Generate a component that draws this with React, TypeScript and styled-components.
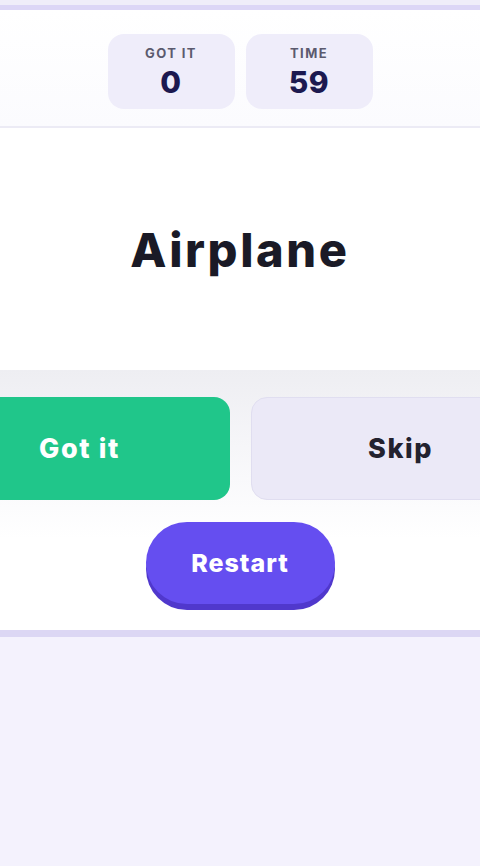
import styled, { createGlobalStyle } from "styled-components";

const GlobalStyle = createGlobalStyle`
  html, body {
    margin: 0;
    padding: 0;
    background: #f4f2fd;
    font-family: "Inter", "Liberation Sans", sans-serif;
  }
`;

function App() {
  return (
    <>
      <GlobalStyle />
      <Page>
        <TopStrip />
        <Stage>
          <Card>
            <StatsBar>
              <StatBox>
                <span className="label">GOT IT</span>
                <span className="value">0</span>
              </StatBox>
              <StatBox>
                <span className="label">TIME</span>
                <span className="value">59</span>
              </StatBox>
            </StatsBar>

            <WordArea>
              <h1>Airplane</h1>
            </WordArea>

            <Actions>
              <ButtonRow>
                <BigButton $variant="success">Got it</BigButton>
                <BigButton $variant="muted">Skip</BigButton>
              </ButtonRow>
              <RestartButton>Restart</RestartButton>
            </Actions>
          </Card>
        </Stage>
      </Page>
    </>
  );
}

const Page = styled.div`
  min-height: 866px;
  overflow: hidden;
`;

const TopStrip = styled.div`
  height: 5px;
  background: #efedf9;
`;

const Stage = styled.div`
  display: flex;
  justify-content: center;
`;

const Card = styled.div`
  flex-shrink: 0;
  width: 640px;
  background: #ffffff;
  border-top: 5px solid #dcd6f6;
  border-bottom: 7px solid #dcd7f4;
`;

const StatsBar = styled.div`
  display: flex;
  justify-content: center;
  align-items: center;
  gap: 11px;
  height: 118px;
  padding-top: 7px;
  border-bottom: 2px solid #ecebf5;
  box-sizing: border-box;
  background: linear-gradient(#ffffff, #fbfbfe);
`;

const StatBox = styled.div`
  width: 127px;
  height: 75px;
  border-radius: 16px;
  background: #efedfa;
  display: flex;
  flex-direction: column;
  align-items: center;
  justify-content: center;
  gap: 4px;

  .label {
    font-size: 13px;
    font-weight: 700;
    letter-spacing: 1.4px;
    color: #5b5a6e;
  }

  .value {
    font-size: 30px;
    font-weight: 800;
    line-height: 34px;
    letter-spacing: 0.5px;
    color: #1c1950;
  }
`;

const WordArea = styled.div`
  height: 242px;
  display: flex;
  align-items: center;
  justify-content: center;

  h1 {
    margin: 0;
    font-size: 47px;
    font-weight: 800;
    letter-spacing: 2.6px;
    color: #1a1a26;
  }
`;

const Actions = styled.div`
  background: linear-gradient(#eeeef2 0%, #f6f6f9 30%, #ffffff 65%);
  padding: 27px 0 26px;
  display: flex;
  flex-direction: column;
  align-items: center;
  gap: 22px;
`;

const ButtonRow = styled.div`
  display: flex;
  gap: 21px;
`;

const BigButton = styled.button<{ $variant: "success" | "muted" }>`
  width: 300px;
  height: 103px;
  border-radius: 16px;
  font-family: inherit;
  font-size: 27px;
  font-weight: 800;
  letter-spacing: 1.6px;
  cursor: pointer;
  background: ${(p) => (p.$variant === "success" ? "#20c68a" : "#ebe9f7")};
  color: ${(p) => (p.$variant === "success" ? "#ffffff" : "#23222f")};
  border: ${(p) =>
    p.$variant === "success" ? "none" : "1.5px solid #e0def0"};
`;

const RestartButton = styled.button`
  width: 189px;
  height: 82px;
  border: none;
  border-radius: 41px;
  background: #654ef0;
  color: #ffffff;
  font-family: inherit;
  font-size: 25px;
  font-weight: 800;
  letter-spacing: 1px;
  cursor: pointer;
  box-shadow: 0 6px 0 #5038cc;
`;

export default App;
